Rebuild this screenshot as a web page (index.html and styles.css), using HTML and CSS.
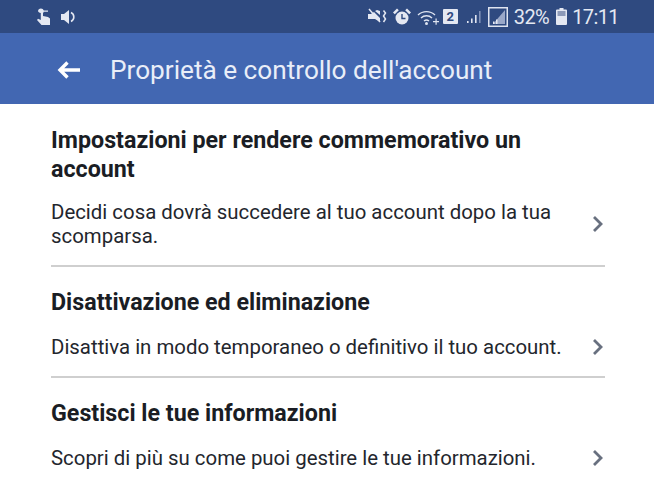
FILE: index.html
```html
<!DOCTYPE html>
<html lang="it">
<head>
<meta charset="utf-8">
<title>Proprietà e controllo dell'account</title>
<link rel="stylesheet" href="styles.css">
</head>
<body>
<div class="status">
  <div class="status-left">
    <svg width="16" height="18" viewBox="0 0 16 18"><path fill="#e4e8f2" d="M5 0.500a3 3 0 0 1 2.800 2H12v1.300H7.800a3 3 0 0 1-.8 1.200V8l5 1 2 1.500V17H5.500L1 12l1-1.200 2.800 1.200V5A3 3 0 0 1 2 3.200 3 3 0 0 1 5 .5z"/></svg>
    <svg class="ic-spk" width="16" height="16" viewBox="0 0 16 16"><path fill="#e4e8f2" d="M1 5h3l5-4v14l-5-4H1z"/><path fill="none" stroke="#e4e8f2" stroke-width="1.600" d="M11 3.500a5 5 0 0 1 0 9"/></svg>
  </div>
  <div class="status-right">
    <svg width="19" height="18" viewBox="0 0 19 18"><path fill="#e4e8f2" d="M0 6h3l3-2 6 6v4L7 11H0z"/><path fill="#e4e8f2" d="M7 3l2-1 3 1v4z"/><path fill="none" stroke="#e4e8f2" stroke-width="1.500" d="M1 1l11 13M15.500 2.500l2 2.500-2 3 2 3-2 3"/></svg>
    <svg class="ic-alarm" width="18" height="18" viewBox="0 0 18 18"><circle cx="9" cy="10" r="6.500" fill="#e4e8f2"/><path fill="none" stroke="#2f4a80" stroke-width="1.400" d="M9 6v4.500h3.500"/><path fill="#e4e8f2" d="M0 4.500 4 .5l1.800 1.800-4 4zM18 4.500 14 .5l-1.800 1.800 4 4z"/></svg>
    <svg class="ic-wifi" width="23" height="18" viewBox="0 0 23 18"><g fill="none" stroke="#dfe4f0" stroke-width="1.400"><path d="M1 7a12.500 12.500 0 0 1 17 0"/><path d="M4 10a8 8 0 0 1 11 0"/><path d="M7 13a4 4 0 0 1 5 0"/></g><circle cx="9.500" cy="15.500" r="1.500" fill="#dfe4f0"/><path fill="#dfe4f0" d="M16 13h2.500v-2.500h1.200V13H22v1.200h-2.300v2.500h-1.200v-2.500H16z"/></svg>
    <span class="sim">2</span>
    <svg class="ic-sig1" width="17" height="16" viewBox="0 0 17 16"><path fill="#dfe4f0" d="M0 12h1.600v2H0zM4 9.500h1.600V14H4zM8 6h1.600v8H8z"/><path fill="#7f90b8" d="M12 2h1.600v12H12z"/></svg>
    <svg class="ic-sig2" width="20" height="20" viewBox="0 0 20 20"><rect x=".75" y=".75" width="18.500" height="18.500" fill="none" stroke="#dfe4f0" stroke-width="1.500"/><path fill="#9aa8c8" d="M17 3v14H5z"/><path fill="#e4e8f2" d="M5 14.500h1.500V17H5zM8 12.500h1.500V17H8z"/></svg>
    <span class="pct">32%</span>
    <svg class="ic-batt" width="11" height="17" viewBox="0 0 11 17"><path fill="#e4e8f2" d="M3.500 0h4v1.500H10a1 1 0 0 1 1 1V16a1 1 0 0 1-1 1H1a1 1 0 0 1-1-1V2.500a1 1 0 0 1 1-1h2.500z"/><path fill="#8d9ab8" d="M1.500 3h8v5h-8z"/></svg>
    <span class="clock">17:11</span>
  </div>
</div>
<header class="appbar">
  <svg class="back" width="24" height="20" viewBox="0 0 24 20"><path fill="none" stroke="#fff" stroke-width="3.400" d="M24 10H4M11.500 2.500 4 10l7.500 7.500"/></svg>
  <h1>Proprietà e controllo dell'account</h1>
</header>
<main class="list">
  <section class="item item-first">
    <h2>Impostazioni per rendere commemorativo un account</h2>
    <div class="row">
      <p>Decidi cosa dovrà succedere al tuo account dopo la tua scomparsa.</p>
      <svg class="chev" width="12" height="18" viewBox="0 0 12 18"><path fill="none" stroke="#68707f" stroke-width="2.800" d="M2 2l7 7-7 7"/></svg>
    </div>
  </section>
  <section class="item">
    <h2>Disattivazione ed eliminazione</h2>
    <div class="row">
      <p>Disattiva in modo temporaneo o definitivo il tuo account.</p>
      <svg class="chev" width="12" height="18" viewBox="0 0 12 18"><path fill="none" stroke="#68707f" stroke-width="2.800" d="M2 2l7 7-7 7"/></svg>
    </div>
  </section>
  <section class="item item-last">
    <h2>Gestisci le tue informazioni</h2>
    <div class="row">
      <p>Scopri di più su come puoi gestire le tue informazioni.</p>
      <svg class="chev" width="12" height="18" viewBox="0 0 12 18"><path fill="none" stroke="#68707f" stroke-width="2.800" d="M2 2l7 7-7 7"/></svg>
    </div>
  </section>
</main>
</body>
</html>
```
FILE: styles.css
```css
* { box-sizing: border-box; }
html, body { margin: 0; height: 100%; overflow: hidden; }
body { background: #fff; font-family: Roboto, "Liberation Sans", sans-serif; color: #1d2129; }
.status {
  height: 33px;
  background: #2f4a80;
  display: flex;
  align-items: center;
  justify-content: space-between;
  padding: 0 35px 0 36px;
  color: #e4e8f2;
}
.status-left { display: flex; align-items: center; }
.ic-spk { margin-left: 8px; }
.status-right { display: flex; align-items: center; }
.ic-alarm { margin-left: 6px; }
.ic-wifi { margin-left: 6px; }
.sim {
  width: 15px; height: 15px; margin-left: 3px;
  background: #e4e8f2; color: #2f4a80; border-radius: 1px;
  font-size: 13px; font-weight: 700; line-height: 15px; text-align: center;
}
.ic-sig1 { margin-left: 9px; }
.ic-sig2 { margin-left: 4px; }
.pct { font-size: 20px; letter-spacing: -.6px; margin-left: 6px; }
.ic-batt { margin-left: 7px; }
.clock { font-size: 20px; letter-spacing: -.6px; margin-left: 5px; }
.appbar {
  height: 71px;
  background: #4267b2;
  display: flex;
  align-items: center;
  padding: 2px 0 0 56px;
}
.back { flex: none; }
.appbar h1 { margin: 0 0 0 30px; font-size: 26.2px; font-weight: 400; color: #e9eef8; white-space: nowrap; }
.list { padding: 0 49px 0 51px; }
.item { border-bottom: 2px solid #cfcfcf; padding-top: 21px; padding-bottom: 17px; }
.item-first { padding-top: 22px; }
.item-first h2 { margin-bottom: 16px; }
.item-last { border-bottom: 0; }
.item h2 { margin-top: 0; margin-left: 0; margin-right: 0; font-size: 23.25px; line-height: 29px; font-weight: 700; width: 510px; color: #1a1d24; }
.item:not(.item-first) h2 { margin-bottom: 18px; }
.row { display: flex; align-items: center; justify-content: space-between; }
.row p { margin: 0; font-size: 20.4px; line-height: 24px; width: 515px; color: #23262d; }
.chev { flex: none; margin-right: 1px; }
```
